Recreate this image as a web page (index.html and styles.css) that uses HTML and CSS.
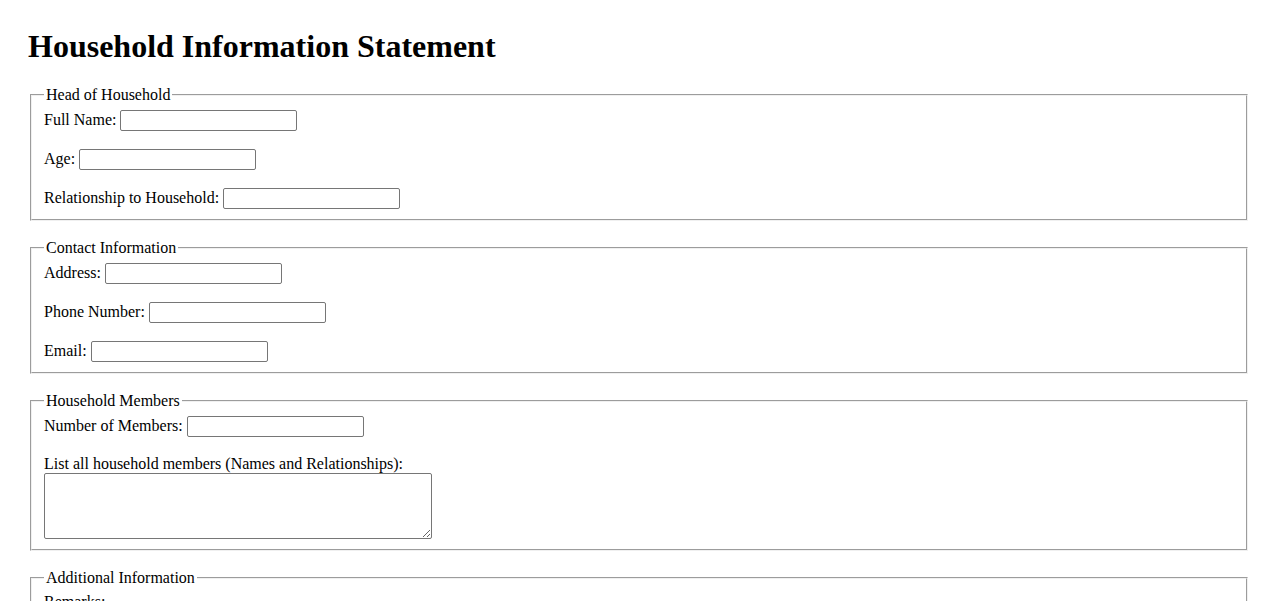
FILE: index.html
```html
<!DOCTYPE html>
<html lang="en">
<head>
<meta charset="utf-8">
<title>Household Information Statement</title>
<link rel="stylesheet" href="styles.css">
</head>
<body>
<h1 class="title">Household Information Statement</h1>
<form class="form">
  <fieldset class="group">
    <legend class="group-title">Head of Household</legend>
    <div class="row"><label class="lbl" for="name">Full Name:</label> <input class="field" id="name" type="text"></div>
    <div class="row"><label class="lbl" for="age">Age:</label> <input class="field" id="age" type="text"></div>
    <div class="row"><label class="lbl" for="rel">Relationship to Household:</label> <input class="field" id="rel" type="text"></div>
  </fieldset>
  <fieldset class="group">
    <legend class="group-title">Contact Information</legend>
    <div class="row"><label class="lbl" for="addr">Address:</label> <input class="field" id="addr" type="text"></div>
    <div class="row"><label class="lbl" for="phone">Phone Number:</label> <input class="field" id="phone" type="text"></div>
    <div class="row"><label class="lbl" for="email">Email:</label> <input class="field" id="email" type="text"></div>
  </fieldset>
  <fieldset class="group">
    <legend class="group-title">Household Members</legend>
    <div class="row"><label class="lbl" for="num">Number of Members:</label> <input class="field" id="num" type="text"></div>
    <div class="row"><label class="lbl" for="members">List all household members (Names and Relationships):</label><br><textarea class="area" id="members"></textarea></div>
  </fieldset>
  <fieldset class="group">
    <legend class="group-title">Additional Information</legend>
    <div class="row"><label class="lbl" for="remarks">Remarks:</label><br><textarea class="area" id="remarks"></textarea></div>
  </fieldset>
</form>
</body>
</html>
```
FILE: styles.css
```css
html { background: #fff; }
body {
  margin: 0;
  padding: 28px;
  font-family: "Liberation Serif", "Times New Roman", serif;
  font-size: 16px;
  color: #000;
}
.title {
  font-size: 32px;
  font-weight: bold;
  margin: 0 0 21px;
  line-height: 37px;
}
.form { margin: 0; }
.group {
  margin: 0 2px 18.4px;
  padding: 5.6px 12px 10px;
  border: 2px groove #f0f0f0;
}
.group-title {
  padding: 0 2px;
}
.row { margin: 0 0 18px; }
.row:last-child { margin-bottom: 0; }
.field {
  box-sizing: border-box;
  width: 177px;
  height: 21px;
  border: 1px solid #767676;
  border-radius: 2px;
  padding: 1px 2px;
  font: 13.33px Arial, "Liberation Sans", sans-serif;
  vertical-align: baseline;
}
.area {
  box-sizing: border-box;
  width: 388px;
  height: 66px;
  border: 1px solid #767676;
  border-radius: 2px;
  padding: 2px;
  font: 13.33px "Liberation Mono", monospace;
  vertical-align: bottom;
}
```
